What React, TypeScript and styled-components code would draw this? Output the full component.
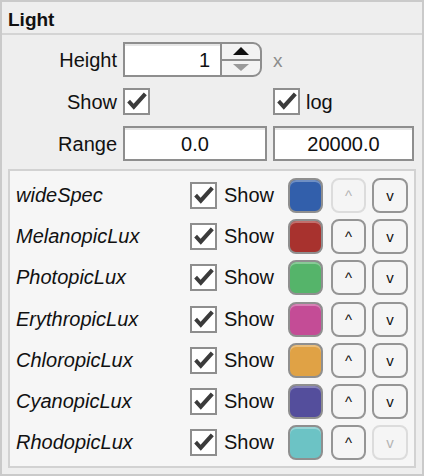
import React from "react";
import styled, { createGlobalStyle } from "styled-components";

const GlobalStyle = createGlobalStyle`
  html, body {
    margin: 0;
    padding: 0;
    background: #eeeeee;
  }
  body {
    font-family: "Liberation Sans", Arial, sans-serif;
    color: #111111;
  }
`;

type Light = {
  name: string;
  color: string;
  upDisabled?: boolean;
  downDisabled?: boolean;
};

const lights: Light[] = [
  { name: "wideSpec", color: "#325fab", upDisabled: true },
  { name: "MelanopicLux", color: "#a8322e" },
  { name: "PhotopicLux", color: "#55b46a" },
  { name: "ErythropicLux", color: "#c44c96" },
  { name: "ChloropicLux", color: "#e0a245" },
  { name: "CyanopicLux", color: "#544e9c" },
  { name: "RhodopicLux", color: "#6cc3c5", downDisabled: true },
];

function CheckMark() {
  return (
    <svg width="23" height="23" viewBox="0 0 23 23">
      <path
        d="M2.2 12.6 L5 9.8 L8.6 13.8 L18.8 2.6 L21.8 5.2 L8.8 19.8 Z"
        fill="#3b3b3b"
      />
    </svg>
  );
}

function Check() {
  return (
    <CheckBox>
      <CheckMark />
    </CheckBox>
  );
}

export default function App() {
  return (
    <>
      <GlobalStyle />
      <Frame>
        <Header>Light</Header>
        <Form>
          <Label>Height</Label>
          <Spinner>
            <NumberField $align="right">1</NumberField>
            <SpinButtons>
              <SpinHalf>
                <Arrow $up $color="#111" />
              </SpinHalf>
              <SpinHalf $bottom>
                <Arrow $color="#9a9a9a" />
              </SpinHalf>
            </SpinButtons>
          </Spinner>
          <Unit>x</Unit>

          <Label>Show</Label>
          <Cell>
            <Check />
          </Cell>
          <Cell>
            <Check />
            <CheckText>log</CheckText>
          </Cell>

          <Label>Range</Label>
          <NumberField $align="center">0.0</NumberField>
          <NumberField $align="center">20000.0</NumberField>
        </Form>
        <List>
          {lights.map((l) => (
            <LightRow key={l.name}>
              <Name>{l.name}</Name>
              <Check />
              <ShowText>Show</ShowText>
              <Swatch $color={l.color} />
              <OrderButton $disabled={l.upDisabled}>^</OrderButton>
              <OrderButton $disabled={l.downDisabled} $wide>
                v
              </OrderButton>
            </LightRow>
          ))}
        </List>
      </Frame>
    </>
  );
}

const Frame = styled.div`
  box-sizing: border-box;
  width: 424px;
  height: 476px;
  border: 2px solid #cacaca;
  background: #eeeeee;
  display: flex;
  flex-direction: column;
`;

const Header = styled.div`
  height: 31px;
  border-bottom: 2px solid #d4d4d4;
  padding-left: 6px;
  font-size: 19px;
  font-weight: bold;
  line-height: 35px;
  color: #111;
`;

const Form = styled.div`
  display: grid;
  grid-template-columns: 115px 144px 141px;
  grid-auto-rows: 35px;
  column-gap: 6px;
  row-gap: 7px;
  padding: 7px 0 0 0;
  font-size: 20px;
`;

const Label = styled.div`
  display: flex;
  align-items: center;
  justify-content: flex-end;
  padding-top: 2px;
`;

const Cell = styled.div`
  display: flex;
  align-items: center;
  gap: 6px;
`;

const NumberField = styled.div<{ $align: "right" | "center" }>`
  box-sizing: border-box;
  height: 35px;
  background: #ffffff;
  border: 2px solid #8e8e8e;
  box-shadow: inset 0 2px 0 #e6e6e6;
  display: flex;
  align-items: center;
  justify-content: ${(p) => (p.$align === "right" ? "flex-end" : "center")};
  padding: 2px 10px 0 10px;
  font-size: 20px;
`;

const Spinner = styled.div`
  display: grid;
  grid-template-columns: 97px 42px;
  ${NumberField} {
    border-right: none;
  }
`;

const SpinButtons = styled.div`
  box-sizing: border-box;
  height: 35px;
  border: 2px solid #8e8e8e;
  border-radius: 0 9px 9px 0;
  background: #f3f3f3;
  display: flex;
  flex-direction: column;
`;

const SpinHalf = styled.div<{ $bottom?: boolean }>`
  flex: 1;
  display: flex;
  align-items: center;
  justify-content: center;
  border-top: ${(p) => (p.$bottom ? "2px solid #8e8e8e" : "none")};
`;

const Arrow = styled.div<{ $up?: boolean; $color: string }>`
  width: 0;
  height: 0;
  border-left: 8px solid transparent;
  border-right: 8px solid transparent;
  ${(p) =>
    p.$up
      ? `border-bottom: 8px solid ${p.$color};`
      : `border-top: 7px solid ${p.$color};`}
`;

const Unit = styled.div`
  display: flex;
  align-items: center;
  padding-top: 3px;
  color: #8c8c8c;
  font-size: 19px;
`;

const CheckBox = styled.div`
  box-sizing: border-box;
  width: 27px;
  height: 27px;
  flex: none;
  border: 2px solid #8e8e8e;
  background: #ffffff;
  display: flex;
  align-items: center;
  justify-content: center;
`;

const CheckText = styled.span`
  font-size: 20px;
  padding-top: 2px;
`;

const List = styled.div`
  margin: 8px 6px 0 6px;
  border: 2px solid #d2d2d2;
  background: #f6f6f6;
  padding: 7px 6px 6px 6px;
  display: flex;
  flex-direction: column;
  gap: 6.2px;
`;

const LightRow = styled.div`
  height: 35px;
  display: flex;
  align-items: center;
  font-size: 20px;
`;

const Name = styled.div`
  flex: 1;
  font-style: italic;
  color: #111;
`;

const ShowText = styled.span`
  margin-left: 7px;
  width: 50px;
  margin-right: 14px;
`;

const Swatch = styled.div<{ $color: string }>`
  box-sizing: border-box;
  width: 35px;
  height: 35px;
  border-radius: 8px;
  border: 2px solid #8f8f8f;
  background: ${(p) => p.$color};
  box-shadow: inset 0 2px 0 rgba(255, 255, 255, 0.3);
  margin-right: 8px;
`;

const OrderButton = styled.div<{ $disabled?: boolean; $wide?: boolean }>`
  box-sizing: border-box;
  width: ${(p) => (p.$wide ? "36px" : "35px")};
  height: 35px;
  margin-left: ${(p) => (p.$wide ? "6px" : "0")};
  border-radius: 8px;
  border: 2px solid ${(p) => (p.$disabled ? "#dcdcdc" : "#959595")};
  background: #f5f5f5;
  color: ${(p) => (p.$disabled ? "#b5b5b5" : "#111")};
  font-size: 15px;
  display: flex;
  align-items: center;
  justify-content: center;
`;
